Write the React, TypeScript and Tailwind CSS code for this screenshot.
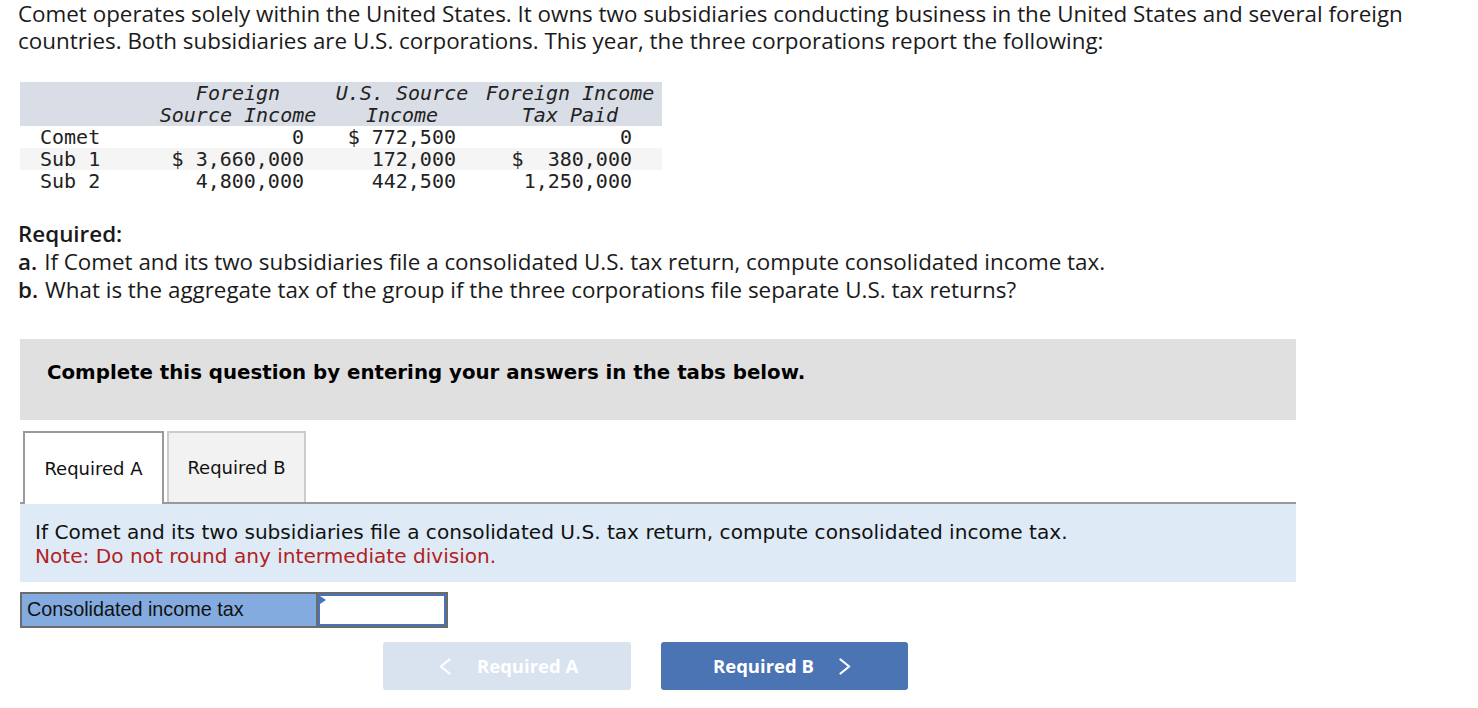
const rows = [
  { name: 'Comet', foreign: '0', us: '$ 772,500', tax: '0', shade: false },
  { name: 'Sub 1', foreign: '$ 3,660,000', us: '172,000', tax: '$  380,000', shade: true },
  { name: 'Sub 2', foreign: '4,800,000', us: '442,500', tax: '1,250,000', shade: false },
]

function Chevron({ dir }: { dir: 'left' | 'right' }) {
  return (
    <svg width="12" height="17" viewBox="0 0 12 17" fill="none" stroke="currentColor" strokeWidth="2.2" strokeLinecap="round" strokeLinejoin="round" aria-hidden="true">
      {dir === 'left' ? <polyline points="10.5,1.5 1.8,8.5 10.5,15.5" /> : <polyline points="1.5,1.5 10.2,8.5 1.5,15.5" />}
    </svg>
  )
}

function IncomeTable() {
  return (
    <table className="ml-[20px] mt-[28px] border-collapse font-['DejaVu_Sans_Mono',monospace] text-[20px] leading-[22px] text-[#222]">
      <thead>
        <tr className="bg-[#d9dde6] italic">
          <th className="w-[130px] font-normal"></th>
          <th className="w-[176px] text-center font-normal">
            Foreign
            <br />
            Source Income
          </th>
          <th className="w-[152px] text-center font-normal">
            U.S. Source
            <br />
            Income
          </th>
          <th className="w-[184px] text-center font-normal">
            Foreign Income
            <br />
            Tax Paid
          </th>
        </tr>
      </thead>
      <tbody>
        {rows.map((row) => (
          <tr key={row.name} className={row.shade ? 'bg-[#f5f5f5]' : ''}>
            <td className="pl-[20px]">{row.name}</td>
            <td className="whitespace-pre pr-[22px] text-right">{row.foreign}</td>
            <td className="whitespace-pre pr-[22px] text-right">{row.us}</td>
            <td className="whitespace-pre pr-[30px] text-right">{row.tax}</td>
          </tr>
        ))}
      </tbody>
    </table>
  )
}

export default function App() {
  return (
    <div className="min-h-[708px] w-[1478px] bg-white text-[#1a1a1a]">
      <p className="pl-[18px] pr-[40px] font-['Open_Sans',sans-serif] text-[22.4px] leading-[27px]">
        Comet operates solely within the United States. It owns two subsidiaries conducting business in the United States and several foreign
        countries. Both subsidiaries are U.S. corporations. This year, the three corporations report the following:
      </p>

      <IncomeTable />

      <div className="mt-[28px] pl-[18px] font-['Open_Sans',sans-serif] text-[22.4px] leading-[28px]">
        <p className="font-semibold">Required:</p>
        <p>
          <span className="mr-[7px] font-semibold">a.</span>If Comet and its two subsidiaries file a consolidated U.S. tax return, compute consolidated income tax.
        </p>
        <p>
          <span className="mr-[7px] font-semibold">b.</span>What is the aggregate tax of the group if the three corporations file separate U.S. tax returns?
        </p>
      </div>

      <div className="ml-[20px] mt-[35px] w-[1276px] font-['DejaVu_Sans',sans-serif]">
        <div className="h-[81px] bg-[#e0e0e0] pl-[27px] pt-[22px] text-[19.8px] font-bold leading-[24px] text-black">
          Complete this question by entering your answers in the tabs below.
        </div>

        <div className="mt-[11px] flex gap-[3px] border-b-2 border-[#999] pl-[3px]">
          <div className="-mb-[2px] flex h-[73px] w-[141px] items-center justify-center border-2 border-b-0 border-[#999] bg-white text-[18px] text-[#111]">
            Required A
          </div>
          <div className="flex h-[71px] w-[139px] items-center justify-center border-2 border-b-0 border-[#ccc] bg-[#f2f2f2] text-[18px] text-[#111]">
            Required B
          </div>
        </div>

        <div className="h-[78px] bg-[#deebf7] pl-[15px] pt-[16px] text-[20.1px] leading-[24px]">
          <p className="text-[#111]">If Comet and its two subsidiaries file a consolidated U.S. tax return, compute consolidated income tax.</p>
          <p className="text-[#b22222]">Note: Do not round any intermediate division.</p>
        </div>

        <div className="mt-[10px] flex h-[36px] w-[428px] border-2 border-[#6b6b6b] bg-[#6b6b6b]">
          <div className="flex w-[294px] items-center bg-[#84abe0] pl-[5px] font-['Liberation_Sans',sans-serif] text-[19.8px] text-[#111]">
            Consolidated income tax
          </div>
          <div className="relative ml-[2px] flex-1 border-2 border-[#4a74b3] bg-white">
            <span className="absolute left-0 top-0 h-0 w-0 border-y-[4px] border-l-[6px] border-y-transparent border-l-[#4a74b3]"></span>
          </div>
        </div>

        <div className="mt-[14px] flex gap-[30px] pl-[363px] font-['Open_Sans',sans-serif] text-[18.5px] font-bold text-white">
          <button type="button" className="flex h-[48px] w-[248px] items-center rounded-[3px] bg-[#d9e3f0] pl-[56px]">
            <Chevron dir="left" />
            <span className="ml-[26px]">Required A</span>
          </button>
          <button type="button" className="flex h-[48px] w-[247px] items-center rounded-[3px] bg-[#4a74b3] pl-[52px]">
            <span>Required B</span>
            <span className="ml-[25px]">
              <Chevron dir="right" />
            </span>
          </button>
        </div>
      </div>
    </div>
  )
}
